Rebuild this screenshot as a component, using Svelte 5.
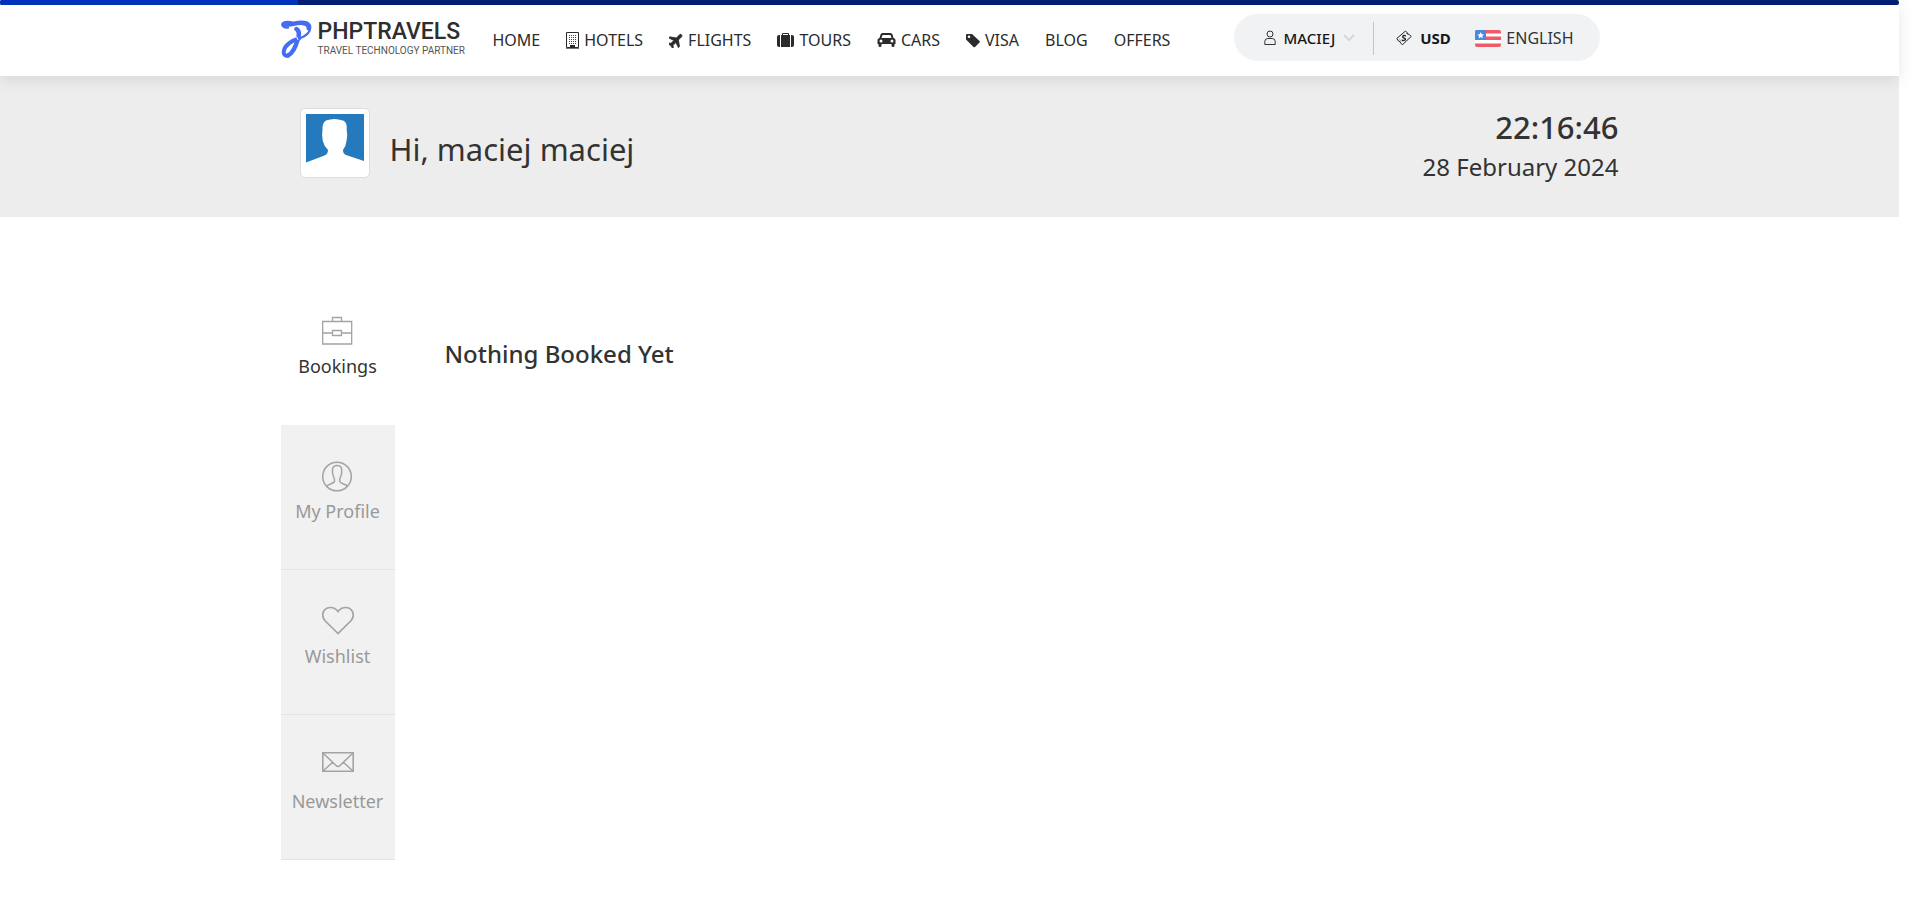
<script>
  const nav = [
    { label: 'HOME' },
    { label: 'HOTELS', icon: 'hotel' },
    { label: 'FLIGHTS', icon: 'plane' },
    { label: 'TOURS', icon: 'case' },
    { label: 'CARS', icon: 'car' },
    { label: 'VISA', icon: 'tag' },
    { label: 'BLOG' },
    { label: 'OFFERS' }
  ];
  const tabs = [
    { label: 'Bookings', icon: 'bookings' },
    { label: 'My Profile', icon: 'profile' },
    { label: 'Wishlist', icon: 'wishlist' },
    { label: 'Newsletter', icon: 'newsletter' }
  ];
  let active = $state('Bookings');
</script>

<div class="page">
  <div class="progress"><span></span></div>
  <header>
    <div class="container bar">
      <a class="logo" href="#home">
        <svg width="31" height="38" viewBox="0 0 31 38" fill="none" stroke="#456cf2" stroke-linecap="round" stroke-linejoin="round">
          <path stroke-width="2.500" d="M7 7.500C3 8 1 5.500 1.500 4C3 1 9 2 13 3C20 1 27.500 1 29 6C30 12 25 16.500 18 18.500" />
          <path stroke-width="4" d="M3.500 4C9 6.500 13 2.500 20 3C25 3.500 28 5 27.500 8.500" />
          <path stroke-width="4.500" d="M15.500 9C18.500 11 18.500 14 17 18.500C15 26 12 33 7 35.500" />
          <path stroke-width="4" d="M18 18.500C11 20.500 4 25 3 30.500C2 34 4 36.500 7 35.500" />
          <path stroke="#fff" stroke-width="1" d="M13.500 15.500q3 1 3.500 4" />
        </svg>
        <span class="brand"><strong>PHPTRAVELS</strong><small>TRAVEL TECHNOLOGY PARTNER</small></span>
      </a>
      <nav>
        {#each nav as item}
          <a href="#{item.label.toLowerCase()}">
            {#if item.icon === 'hotel'}
              <svg width="13" height="17" viewBox="0 0 13 17"><path fill="none" stroke="#2b2b2b" d="M.5.5h12v15H.5z" /><path stroke="#444" stroke-width="1" stroke-dasharray="1 1" d="M3 3.500h8M3 5.500h8M3 7.500h8M3 9.500h8M3 11.500h8" /><path fill="#2b2b2b" d="M4 13h5v3H4z" /><path stroke="#777" d="M0 16.500h13" /></svg>
            {:else if item.icon === 'plane'}
              <svg width="14" height="16" viewBox="3 0 19 22" fill="#2b2b2b"><path transform="rotate(45 12 12)" stroke="#2b2b2b" d="M21.500 16v-2L14 8.500V2.500c0-1.200-.8-2-2-2s-2 .8-2 2v6L2.500 14v2L10 13.500V19l-2.500 2V22.500l4.500-1 4.500 1V21L14 19v-5.500z" /></svg>
            {:else if item.icon === 'case'}
              <svg width="17" height="16" viewBox="0 0 17 16"><path fill="#2b2b2b" d="M4 3h9v12H4zM0 5q0-2 2-2h1v12H2q-2 0-2-2zM14 3h1q2 0 2 2v8q0 2-2 2h-1z" /><path fill="none" stroke="#2b2b2b" d="M5.500 3V1.500h6V3" /></svg>
            {:else if item.icon === 'car'}
              <svg width="19" height="16" viewBox="0 0 18 16"><path fill="#2b2b2b" fill-rule="evenodd" d="M5 1h8q1.500 0 2 1.500L16 6q2 .5 2 2v4h-1v1.500q0 1.500-1.500 1.500T14 13.500V12H4v1.500Q4 15 2.500 15T1 13.500V12H0V8q0-1.500 2-2l1-3.500Q3.500 1 5 1zM5 3 4 6h10l-1-3zM3.500 7.500a1.500 1.500 0 1 0 0 3 1.500 1.500 0 0 0 0-3zm11 0a1.500 1.500 0 1 0 0 3 1.500 1.500 0 0 0 0-3z" /></svg>
            {:else if item.icon === 'tag'}
              <svg width="14" height="15" viewBox="0 0 14 15"><path fill="#2b2b2b" fill-rule="evenodd" d="M0 2q0-1 1-1h5l7.500 7q.8.800 0 1.500L9 14q-.8.700-1.500 0L0 6.500zM3 2.500a1.300 1.300 0 1 0 0 2.600 1.300 1.300 0 0 0 0-2.600z" /></svg>
            {/if}
            <span>{item.label}</span>
          </a>
        {/each}
      </nav>
      <div class="pill">
        <button class="user">
          <svg width="12" height="16" viewBox="0 0 12 16" fill="none" stroke="#333"><circle cx="6" cy="4" r="3" /><path d="M.8 14.500v-3q0-3 3-3h4.400q3 0 3 3v3z" /></svg>
          <span>MACIEJ</span>
          <svg width="12" height="8" viewBox="0 0 12 8" fill="none" stroke="#d5d7da" stroke-width="2"><path d="m1 1 5 5 5-5" /></svg>
        </button>
        <button class="currency">
          <svg width="16" height="16" viewBox="0 0 16 16" fill="none" stroke="#222"><path d="M.8 8.500 9.500 1l1.700 1.700q0 1.700 1.900 1.600L15.200 6.500 6.300 14.800l-1.700-1.900q0-1.700-1.900-1.700z" /><path stroke-width="1.300" d="M9.700 6.300Q8 4.800 7 6T8.300 8.200 8.500 10.200 6 9.700" /><path d="M9.300 5 8.800 5.700M7 10.500l-.5.700M10.500 3.500l.7.700M3.700 9.500l.7.700" /></svg>
          <span>USD</span>
        </button>
        <button class="language">
          <svg width="26" height="17" viewBox="0 0 26 17"><defs><clipPath id="flag"><rect width="26" height="17" rx="2" /></clipPath></defs><g clip-path="url(#flag)"><path fill="#fff" d="M0 0h26v17H0z" /><path fill="#f05b69" d="M0 0h26v3.500H0zM11 6.500h15v3.500H11zM0 13.500h26V17H0z" /><path fill="#4a89dc" d="M0 0h11v10H0z" /><path fill="#fff" d="m5.700 2 1 2.200 2.400.2-1.800 1.600.5 2.400-2.100-1.300-2.100 1.300.5-2.400-1.800-1.600 2.400-.2z" /></g></svg>
          <span>ENGLISH</span>
        </button>
      </div>
    </div>
  </header>

  <section class="welcome">
    <div class="container greeting">
      <div class="avatar">
        <svg width="58" height="58" viewBox="0 0 58 58"><path fill="#257abd" d="M0 0h58v47L40 41Q37 40 37 36q3-4 3.500-9Q42 21 40.700 16 41.500 8 37 6.500 28 3.500 20 6.500 16 9 16.500 16q-1 5 .3 11Q18 32 22 36q0 4-3.500 5.500L0 48.500z" /></svg>
      </div>
      <h1>Hi, maciej maciej</h1>
      <div class="clock"><time class="hour">22:16:46</time><time class="date">28 February 2024</time></div>
    </div>
  </section>

  <main class="container">
    <div class="tabs" role="tablist">
      {#each tabs as tab}
        <button role="tab" aria-selected={active === tab.label} class:active={active === tab.label} onclick={() => (active = tab.label)}>
          <svg width="32" height="32" viewBox="0 0 32 32" fill="none" stroke="#a3a3a3">
            {#if tab.icon === 'bookings'}
              <path stroke-width="1.300" d="M.7 5.500h29v22.500H.7zM10.500 5V1.500h9V5M1 17h9.500M19.500 17H29.500M10.500 14.500h9v5h-9z" />
            {:else if tab.icon === 'profile'}
              <circle cx="15" cy="15.500" r="14.300" stroke-width="1.500" />
              <path stroke-width="1.500" d="M4.500 25.500C6 23 11 23 12.500 20.500q.6-2-.8-4.500-1.500-3-1.200-6Q10 4.700 15 4.500t4.700 5.500q.3 3-1.200 6-1.400 2.500-.8 4.500C19 23 24 23 25.500 25.500" />
            {:else if tab.icon === 'wishlist'}
              <path stroke-width="1.700" d="M16 27.500 2.800 14.500C-1.500 9 1.500 1.500 8.500 1.500Q13 1.500 16 5.500q3-4 7.500-4c7 0 10 7.500 5.700 13z" />
            {:else}
              <path d="M.8 1.800h30.400v18.400H.8z" stroke-width="1.600" /><path stroke-width="1.500" d="m1 2 13 12.500q2 2 4 0L31 2M1 20l10-9M31 20l-10-9" />
            {/if}
          </svg>
          <span>{tab.label}</span>
        </button>
      {/each}
    </div>
    <div class="panel" role="tabpanel"><h2>Nothing Booked Yet</h2></div>
  </main>
</div>

<style>
  :global(body) { margin: 0; background: #fff; }
  .page { margin-right: 21px; font-family: "Noto Sans", sans-serif; color: #333; }
  .page * { box-sizing: border-box; }
  button { font: inherit; color: inherit; background: none; border: 0; padding: 0; cursor: pointer; }
  a { color: inherit; text-decoration: none; }
  svg { display: block; flex: none; }
  .container { width: 100%; max-width: 1338px; margin: 0 auto; }
  .progress { height: 5px; background: #001f78; border-radius: 2px; overflow: hidden; }
  .progress span { display: block; width: 15.700%; height: 100%; background: #0033c0; }
  header { position: relative; height: 71px; background: #fff; box-shadow: 0 3px 16px rgba(0, 0, 0, .1); }
  .bar { display: flex; align-items: flex-start; }
  .logo { display: flex; gap: 6px; width: 212px; padding-top: 15px; }
  .brand { display: flex; flex-direction: column; white-space: nowrap; }
  .brand strong { font: 500 23px/24px Roboto, sans-serif; color: #2e2e2e; }
  .brand small { font: 400 10px/14px Roboto, sans-serif; color: #555; }
  nav { display: flex; gap: 26px; padding-top: 24px; font-size: 16px; line-height: 22px; color: #2b2b2b; }
  nav a { display: flex; align-items: center; gap: 5px; }
  .pill { display: flex; align-items: center; margin: 9px 19px 0 auto; width: 366px; height: 47px; padding: 1px 26px 0 30px; border-radius: 24px; background: #f1f2f4; }
  .pill button { display: flex; align-items: center; white-space: nowrap; }
  .pill .user { height: 33px; gap: 8px; padding-right: 18px; border-right: 1px solid #c3c5c8; font-size: 15px; font-weight: 500; color: #15181b; }
  .pill .currency { gap: 8px; margin-left: 22px; font-size: 15px; font-weight: 700; color: #15181b; }
  .pill .language { gap: 5px; margin-left: auto; font-size: 16px; }
  .welcome { background: #ededed; height: 141px; }
  .greeting { display: flex; align-items: flex-start; padding: 32px 0 0 19px; }
  .avatar { width: 70px; height: 70px; padding: 5px; border: 1px solid #ddd; border-radius: 5px; background: #fff; }
  h1 { margin: 20px 0 0 20px; font-size: 31px; font-weight: 400; line-height: 42px; }
  .clock { display: flex; flex-direction: column; align-items: flex-end; margin-left: auto; }
  .hour { font-size: 31px; font-weight: 500; line-height: 38px; }
  .date { font-size: 24px; line-height: 42px; }
  main { display: flex; align-items: flex-start; padding-top: 63px; }
  .tabs { display: flex; flex-direction: column; width: 114px; }
  .tabs button { display: flex; flex-direction: column; align-items: center; height: 145px; padding-top: 36px; background: #f1f1f1; border-bottom: 1px solid #e3e3e3; color: #999; font-size: 18px; line-height: 24px; }
  .tabs button.active { background: #fff; color: #333; border-color: #fff; }
  .tabs span { margin-top: 6px; }
  .panel { flex: 1; padding: 57px 0 0 50px; }
  h2 { margin: 0; font-size: 24px; font-weight: 500; line-height: 34px; }
</style>
